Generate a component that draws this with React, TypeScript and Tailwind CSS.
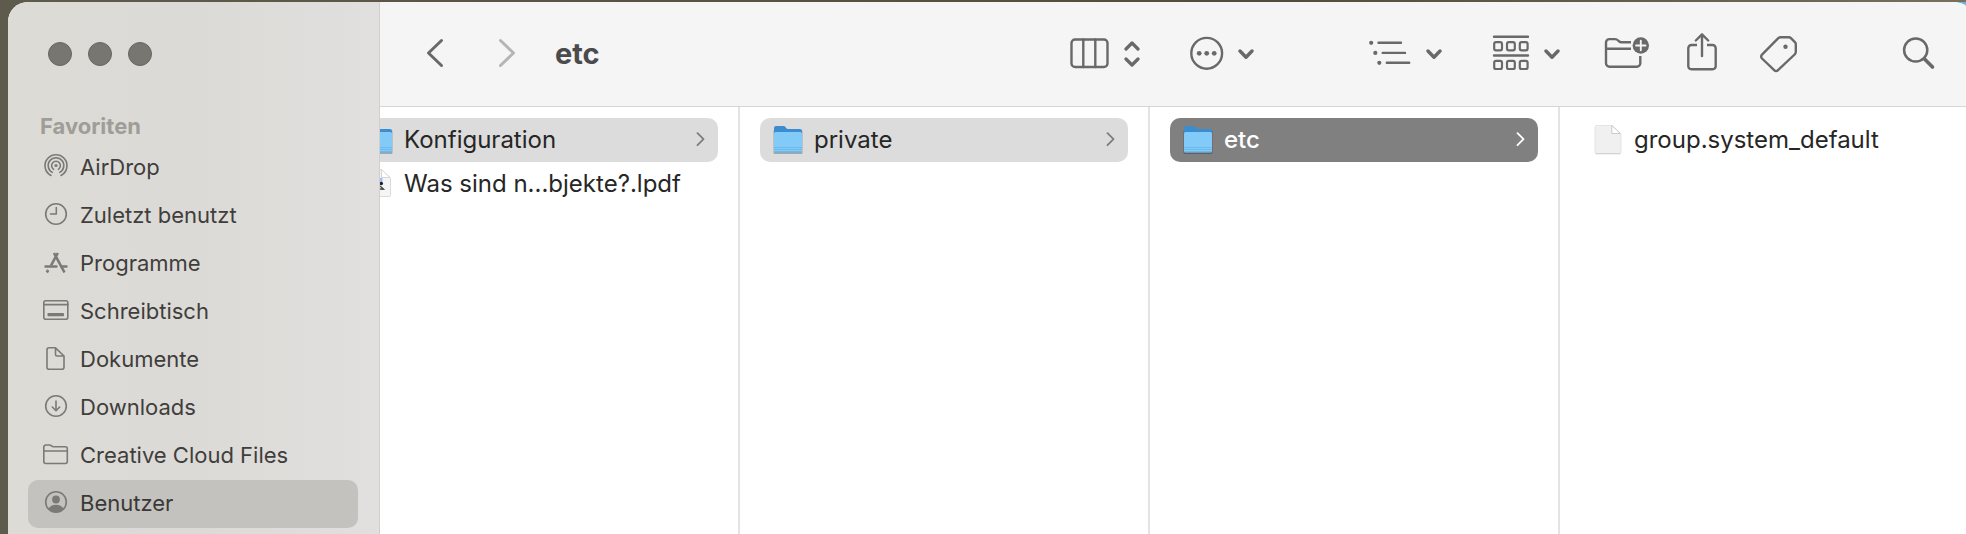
import type { ReactNode } from "react";

function Chevron() {
  return (
    <svg width="16" height="44" viewBox="0 0 16 44" fill="none" stroke="currentColor" strokeWidth="3.4" strokeLinecap="round" strokeLinejoin="round">
      <path d="M2 19l6 6.2 6-6.2" />
    </svg>
  );
}

function ToolbarIcon({ width, children }: { width: number; children: ReactNode }) {
  return (
    <svg width={width} height="44" viewBox={`0 0 ${width} 44`} fill="none" stroke="currentColor" strokeWidth="2.4" strokeLinecap="round" strokeLinejoin="round">
      {children}
    </svg>
  );
}

function SidebarIcon({ children }: { children: ReactNode }) {
  return (
    <svg className="shrink-0 text-[#7b7a76]" width="28" height="28" viewBox="0 0 28 28" fill="none" stroke="currentColor" strokeWidth="1.6" strokeLinecap="round" strokeLinejoin="round">
      {children}
    </svg>
  );
}

function FolderIcon() {
  return (
    <svg className="shrink-0" width="32" height="32" viewBox="0 0 32 32">
      <rect x="1.500" y="6" width="29" height="24" rx="1.500" fill="#000" opacity="0.250" />
      <path d="M2 4a2 2 0 0 1 2-2h7c1.400 0 2 .5 2.800 1.400S15.500 5 16.500 5H28a2 2 0 0 1 2 2v6H2z" fill="#3b8dcf" />
      <rect x="2" y="8" width="28" height="20.500" rx="1.500" fill="#82cbf8" />
      <path d="M2 23.500h28M2 25.500h28" stroke="#6ab4e4" strokeWidth="0.800" />
      <path d="M2.500 28h27" stroke="#5ba5d6" strokeWidth="1.200" />
    </svg>
  );
}

function FileIcon() {
  return (
    <svg className="shrink-0" width="32" height="32" viewBox="0 0 32 32">
      <path d="M4.500 1.500H20L29 10v18a1.500 1.500 0 0 1-1.500 1.500h-23A1.500 1.500 0 0 1 3 28V3a1.500 1.500 0 0 1 1.500-1.500z" fill="#f0f0f0" stroke="#dedede" strokeWidth="0.800" />
      <path d="M3.500 29.800h25" stroke="#c8c8c8" strokeWidth="0.800" />
      <path d="M19.800 1.500V9.500H28.500z" fill="#fff" stroke="#c4c4c4" strokeWidth="0.900" strokeLinejoin="round" />
    </svg>
  );
}

function LpdfIcon() {
  return (
    <svg className="shrink-0" width="32" height="32" viewBox="0 0 32 32">
      <path d="M4.500 1.500H19L28.500 10v17a1.500 1.500 0 0 1-1.500 1.500H4.500A1.500 1.500 0 0 1 3 27V3a1.500 1.500 0 0 1 1.500-1.500z" fill="#f5f5f5" stroke="#d6d6d6" strokeWidth="0.900" />
      <path d="M19.500 1.500V9.500H28z" fill="#fff" stroke="#d0d0d0" strokeWidth="0.900" />
      <rect x="8" y="10" width="12.500" height="7" fill="#a5bff5" />
      <circle cx="19.300" cy="15.500" r="1.700" fill="#222" />
      <path d="M18 18l3.500 3H17M18.500 21l3 .3" stroke="#444" strokeWidth="1.300" fill="none" />
    </svg>
  );
}

const favorites = [
  {
    name: "AirDrop",
    icon: (
      <>
        <circle cx="14" cy="12.500" r="1.600" fill="currentColor" stroke="none" />
        <path d="M11.600 16.300a4.400 4.400 0 1 1 4.800 0M10.200 19.400a7.800 7.800 0 1 1 7.600 0M9 22.500a11 11 0 1 1 10 0" />
      </>
    ),
  },
  {
    name: "Zuletzt benutzt",
    icon: (
      <>
        <circle cx="14" cy="13" r="10.300" />
        <path d="M14.300 6.500V13H8.500" />
      </>
    ),
  },
  {
    name: "Programme",
    icon: (
      <>
        <path strokeWidth="2.600" strokeLinecap="butt" d="M15.800 4L9 16.500M12 4l10.500 19.500M6.200 21L4.800 23.500" />
        <path strokeWidth="2.400" d="M3.500 17.500h11M19.500 17.500h5" />
      </>
    ),
  },
  {
    name: "Schreibtisch",
    icon: (
      <>
        <rect x="1.800" y="3.800" width="24" height="18.500" rx="2" />
        <path d="M2 7.600h24" />
        <rect x="5.500" y="16" width="16.500" height="3.300" rx="0.800" fill="currentColor" stroke="none" />
      </>
    ),
  },
  {
    name: "Dokumente",
    icon: <path d="M13.500 2.800H7A2 2 0 0 0 5 4.800v17.400a2 2 0 0 0 2 2h13a2 2 0 0 0 2-2V11zM13.500 2.800V9.500a1.500 1.500 0 0 0 1.500 1.500h7" />,
  },
  {
    name: "Downloads",
    icon: (
      <>
        <circle cx="14" cy="13" r="10.300" />
        <path d="M14 8v9.500M10.300 14l3.700 3.700 3.700-3.700" />
      </>
    ),
  },
  {
    name: "Creative Cloud Files",
    icon: (
      <>
        <path d="M1.800 20.500V6a2 2 0 0 1 2-2h3.700c1 0 1.500.4 2 .9s1 .9 2 .9h11.800a2 2 0 0 1 2 2v12.700a2 2 0 0 1-2 2H3.800a2 2 0 0 1-2-2z" />
        <path d="M2 10h23" />
      </>
    ),
  },
  {
    name: "Benutzer",
    icon: (
      <>
        <circle cx="14" cy="13" r="10.300" />
        <circle cx="14" cy="10.500" r="3.900" fill="currentColor" stroke="none" />
        <path d="M6.500 19.800c1.300-2.600 4.200-4 7.500-4s6.200 1.400 7.500 4A10.300 10.300 0 0 1 14 23.300a10.300 10.300 0 0 1-7.500-3.500z" fill="currentColor" stroke="none" />
      </>
    ),
    active: true,
  },
];

function Sidebar() {
  return (
    <aside className="w-[372px] shrink-0 border-r border-[#cfcfce] bg-linear-to-r from-[#dddbd6] via-[#dcdad6] to-[#e1e0df] pr-[21px] pl-5">
      <div className="flex gap-4 pl-5 pt-10">
        <button aria-label="Schließen" className="size-6 rounded-full border border-[#686661] bg-[#787671]" />
        <button aria-label="Minimieren" className="size-6 rounded-full border border-[#686661] bg-[#787671]" />
        <button aria-label="Maximieren" className="size-6 rounded-full border border-[#686661] bg-[#787671]" />
      </div>
      <h2 className="mt-11 pl-3 text-[22px] leading-8 font-bold text-[#9f9d98]">Favoriten</h2>
      <nav className="mt-0.5">
        {favorites.map((item) => (
          <a
            key={item.name}
            href="#"
            className={
              item.active
                ? "flex h-12 items-center gap-2.5 rounded-[10px] bg-[#c4c2be] pb-0.5 pl-3.5 text-[22px] text-[#3a3937]"
                : "flex h-12 items-center gap-2.5 rounded-[10px] pb-0.5 pl-3.5 text-[22px] text-[#3f3e3c]"
            }
          >
            <SidebarIcon>{item.icon}</SidebarIcon>
            {item.name}
          </a>
        ))}
      </nav>
    </aside>
  );
}

function Toolbar() {
  return (
    <header className="flex h-[105px] shrink-0 items-center border-b border-[#d6d6d6] bg-[#f5f5f5] pr-[38px] pl-[46px] text-[#696969]">
      <button aria-label="Zurück">
        <ToolbarIcon width={18}>
          <path strokeWidth="3" d="M15.500 8.500L2.500 21l13 12.500" />
        </ToolbarIcon>
      </button>
      <button aria-label="Vorwärts" className="ml-[54px] text-[#b5b5b5]">
        <ToolbarIcon width={18}>
          <path strokeWidth="3" d="M2.500 8.500l13 12.500-13 12.500" />
        </ToolbarIcon>
      </button>
      <h1 className="ml-[39px] text-[29px] font-bold text-[#4b4b4b]">etc</h1>

      <div className="ml-auto flex items-center">
        <button aria-label="Darstellung" className="flex gap-3.5">
          <ToolbarIcon width={40}>
            <rect x="1.500" y="7.500" width="36" height="27.500" rx="3.500" />
            <path d="M13.300 7.500V35M25.300 7.500V35" />
          </ToolbarIcon>
          <svg width="16" height="44" viewBox="0 0 16 44" fill="none" stroke="currentColor" strokeWidth="3.200" strokeLinecap="round" strokeLinejoin="round">
            <path d="M2 17l6-6 6 6M2 27l6 6 6-6" />
          </svg>
        </button>
        <button aria-label="Aktionen" className="ml-[50px] flex gap-3.5">
          <ToolbarIcon width={34}>
            <circle cx="16.700" cy="21.300" r="15.400" />
            <g fill="currentColor" stroke="none">
              <circle cx="9.200" cy="21.300" r="2.400" />
              <circle cx="16.700" cy="21.300" r="2.400" />
              <circle cx="24.200" cy="21.300" r="2.400" />
            </g>
          </ToolbarIcon>
          <Chevron />
        </button>
        <button aria-label="Sortieren" className="ml-[114px] flex gap-3.5">
          <ToolbarIcon width={44}>
            <g fill="currentColor" stroke="none">
              <circle cx="3.200" cy="10.800" r="2.100" />
              <circle cx="7.300" cy="20.900" r="2.100" />
              <circle cx="11.300" cy="30.800" r="2.100" />
            </g>
            <path d="M10.500 10.800h22.500M14.700 20.900h22.300M18.800 30.800h22.400" />
          </ToolbarIcon>
          <Chevron />
        </button>
        <button aria-label="Gruppieren" className="ml-[50px] flex gap-3.5">
          <ToolbarIcon width={38}>
            <path d="M2 4.800h34M2 23.500h34" />
            <g strokeWidth="2.200">
              <rect x="2.200" y="10.200" width="7.800" height="8.200" rx="1.800" />
              <rect x="15" y="10.200" width="7.800" height="8.200" rx="1.800" />
              <rect x="27.800" y="10.200" width="7.800" height="8.200" rx="1.800" />
              <rect x="2.200" y="28.800" width="7.800" height="8.200" rx="1.800" />
              <rect x="15" y="28.800" width="7.800" height="8.200" rx="1.800" />
              <rect x="27.800" y="28.800" width="7.800" height="8.200" rx="1.800" />
            </g>
          </ToolbarIcon>
          <Chevron />
        </button>
        <button aria-label="Neuer Ordner" className="ml-11">
          <ToolbarIcon width={46}>
            <path strokeLinecap="butt" d="M27 10.300H17.500c-3 0-3-3.200-6.500-3.200H5.500a3.500 3.500 0 0 0-3.500 3.500v20.600A3.500 3.500 0 0 0 5.500 34.700h27.300a3.500 3.500 0 0 0 3.500-3.500V24M2 16.800h25" />
            <circle cx="36.800" cy="13.500" r="8.200" fill="currentColor" stroke="none" />
            <path stroke="#f5f5f5" strokeWidth="1.900" d="M36.800 8.800v9.400M32.100 13.500h9.400" />
          </ToolbarIcon>
        </button>
        <button aria-label="Teilen" className="ml-9">
          <ToolbarIcon width={32}>
            <path strokeLinecap="butt" d="M11 13H5.500A3.200 3.200 0 0 0 2.300 16.200v18A3.200 3.200 0 0 0 5.500 37.200h21A3.200 3.200 0 0 0 29.700 34.200v-18A3.200 3.200 0 0 0 26.500 13H21" />
            <path d="M16 24V2.500M9.800 8.500L16 2.300l6.200 6.200" />
          </ToolbarIcon>
        </button>
        <button aria-label="Tags" className="ml-[42px]">
          <ToolbarIcon width={38}>
            <path d="M20.500 5.200h8.200a3 3 0 0 1 2.200.9l4 4a3 3 0 0 1 .9 2.200v7.400a4 4 0 0 1-1.200 2.800L18 38.200a2.600 2.600 0 0 1-3.800 0L2 26.500a2.600 2.600 0 0 1 0-3.800L18.300 6.200a3.500 3.500 0 0 1 2.200-1z" />
            <circle cx="25.500" cy="14.700" r="2.200" fill="currentColor" stroke="none" />
          </ToolbarIcon>
        </button>
        <button aria-label="Suchen" className="ml-[104px]">
          <ToolbarIcon width={34}>
            <circle cx="13.700" cy="18" r="11.600" strokeWidth="2.500" />
            <path strokeWidth="3.600" d="M22.500 27l8 8" />
          </ToolbarIcon>
        </button>
      </div>
    </header>
  );
}

function Row({ name, icon, state = "plain" }: { name: string; icon: ReactNode; state?: "plain" | "open" | "selected" }) {
  const colors = {
    plain: "text-[#262626]",
    open: "bg-[#dcdcdc] text-[#262626]",
    selected: "bg-[#808080] text-white font-medium",
  };
  return (
    <button className={`flex h-11 w-full items-center gap-2.5 rounded-[10px] px-3 text-left text-[24px] whitespace-nowrap ${colors[state]}`}>
      {icon}
      <span className="flex-1">{name}</span>
      {state !== "plain" && (
        <svg className={state === "open" ? "text-[#7d7d7d]" : "text-white"} width="10" height="16" viewBox="0 0 10 16" fill="none" stroke="currentColor" strokeWidth="1.800" strokeLinecap="round" strokeLinejoin="round">
          <path d="M1.500 1.200l6 6-6 6" />
        </svg>
      )}
    </button>
  );
}

export default function App() {
  return (
    <div className="h-screen overflow-hidden bg-linear-to-r from-[#5f5b4c] via-[#554b3a] via-65% to-[#76705f] pt-0.5 pl-2 font-['Inter',sans-serif]">
      <div className="-mr-2 h-full bg-linear-to-r from-[#5f5b4c] from-50% to-[#6cb4e2] to-50%">
        <div className="flex h-full overflow-hidden rounded-t-[20px] bg-white">
          <Sidebar />
          <main className="flex min-w-0 flex-1 flex-col">
            <Toolbar />
            <div className="flex min-h-0 flex-1 overflow-hidden">
              <section className="-ml-[50px] w-[410px] shrink-0 border-r-2 border-[#e3e3e3] px-5 pt-[11px]">
                <Row name="Konfiguration" icon={<FolderIcon />} state="open" />
                <Row name="Was sind n...bjekte?.lpdf" icon={<LpdfIcon />} />
              </section>
              <section className="w-[410px] shrink-0 border-r-2 border-[#e3e3e3] px-5 pt-[11px]">
                <Row name="private" icon={<FolderIcon />} state="open" />
              </section>
              <section className="w-[410px] shrink-0 border-r-2 border-[#e3e3e3] px-5 pt-[11px]">
                <Row name="etc" icon={<FolderIcon />} state="selected" />
              </section>
              <section className="flex-1 px-5 pt-[11px]">
                <Row name="group.system_default" icon={<FileIcon />} />
              </section>
            </div>
          </main>
        </div>
      </div>
    </div>
  );
}
